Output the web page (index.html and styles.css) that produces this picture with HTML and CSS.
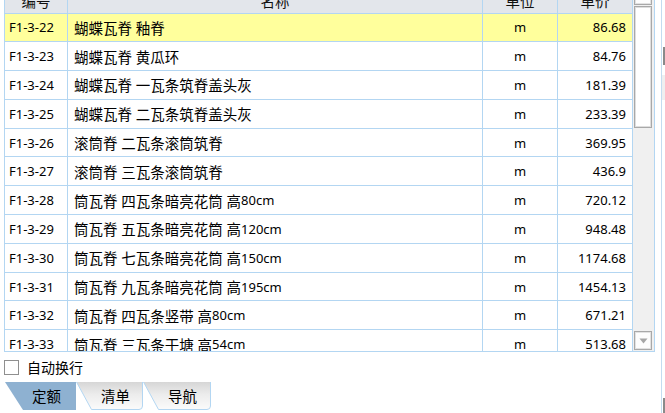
FILE: index.html
```html
<!DOCTYPE html>
<html lang="zh-CN">
<head>
<meta charset="utf-8">
<title>定额</title>
<link rel="stylesheet" href="styles.css">
</head>
<body>
<div class="page">
  <div class="main">
    <div class="grid">
      <div class="table">
        <div class="row head">
          <div class="cell c">编号</div>
          <div class="cell c">名称</div>
          <div class="cell c">单位</div>
          <div class="cell c">单价</div>
        </div>
        <div class="row sel">
          <div class="cell code">F1-3-22</div>
          <div class="cell name">蝴蝶瓦脊 釉脊</div>
          <div class="cell unit">m</div>
          <div class="cell price">86.68</div>
        </div>
        <div class="row">
          <div class="cell code">F1-3-23</div>
          <div class="cell name">蝴蝶瓦脊 黄瓜环</div>
          <div class="cell unit">m</div>
          <div class="cell price">84.76</div>
        </div>
        <div class="row">
          <div class="cell code">F1-3-24</div>
          <div class="cell name">蝴蝶瓦脊 一瓦条筑脊盖头灰</div>
          <div class="cell unit">m</div>
          <div class="cell price">181.39</div>
        </div>
        <div class="row">
          <div class="cell code">F1-3-25</div>
          <div class="cell name">蝴蝶瓦脊 二瓦条筑脊盖头灰</div>
          <div class="cell unit">m</div>
          <div class="cell price">233.39</div>
        </div>
        <div class="row">
          <div class="cell code">F1-3-26</div>
          <div class="cell name">滚筒脊 二瓦条滚筒筑脊</div>
          <div class="cell unit">m</div>
          <div class="cell price">369.95</div>
        </div>
        <div class="row">
          <div class="cell code">F1-3-27</div>
          <div class="cell name">滚筒脊 三瓦条滚筒筑脊</div>
          <div class="cell unit">m</div>
          <div class="cell price">436.9</div>
        </div>
        <div class="row">
          <div class="cell code">F1-3-28</div>
          <div class="cell name">筒瓦脊 四瓦条暗亮花筒 高<span class="lat">80cm</span></div>
          <div class="cell unit">m</div>
          <div class="cell price">720.12</div>
        </div>
        <div class="row">
          <div class="cell code">F1-3-29</div>
          <div class="cell name">筒瓦脊 五瓦条暗亮花筒 高<span class="lat">120cm</span></div>
          <div class="cell unit">m</div>
          <div class="cell price">948.48</div>
        </div>
        <div class="row">
          <div class="cell code">F1-3-30</div>
          <div class="cell name">筒瓦脊 七瓦条暗亮花筒 高<span class="lat">150cm</span></div>
          <div class="cell unit">m</div>
          <div class="cell price">1174.68</div>
        </div>
        <div class="row">
          <div class="cell code">F1-3-31</div>
          <div class="cell name">筒瓦脊 九瓦条暗亮花筒 高<span class="lat">195cm</span></div>
          <div class="cell unit">m</div>
          <div class="cell price">1454.13</div>
        </div>
        <div class="row">
          <div class="cell code">F1-3-32</div>
          <div class="cell name">筒瓦脊 四瓦条竖带 高<span class="lat">80cm</span></div>
          <div class="cell unit">m</div>
          <div class="cell price">671.21</div>
        </div>
        <div class="row">
          <div class="cell code">F1-3-33</div>
          <div class="cell name">筒瓦脊 三瓦条干塘 高<span class="lat">54cm</span></div>
          <div class="cell unit">m</div>
          <div class="cell price">513.68</div>
        </div>
      </div>
      <div class="scrollbar">
        <div class="sb-btn sb-up"></div>
        <div class="sb-thumb"></div>
        <div class="sb-fill"></div>
        <div class="sb-btn sb-down">
          <svg width="9" height="6" viewBox="0 0 9 6"><path d="M0.5 0.5 H8.5 L4.5 5.5 Z" fill="#a6a6a6"/></svg>
        </div>
      </div>
    </div>

    <div class="options">
      <span class="checkbox"></span>
      <span class="opt-label">自动换行</span>
    </div>

    <div class="tabs">
      <div class="tab active">
        <svg class="tab-bg" width="71" height="28" viewBox="0 0 71 28"><path d="M0 0 H71 V28 H18 Z" fill="#8eb1d1"/></svg>
        <span class="tab-label">定额</span>
      </div>
      <div class="tab t2">
        <svg class="tab-bg" width="67" height="28" viewBox="0 0 67 28">
          <defs>
            <linearGradient id="tg" x1="0" y1="0" x2="0" y2="1">
              <stop offset="0" stop-color="#d6d6d6"/>
              <stop offset="0.45" stop-color="#ececec"/>
              <stop offset="1" stop-color="#fbfbfb"/>
            </linearGradient>
          </defs>
          <path d="M0.5 0 L15.5 27.5 H63 Q66.5 27.5 66.5 24 V0 Z" fill="url(#tg)"/>
          <path d="M0.5 0 L15.5 27.5 H63 Q66.5 27.5 66.5 24 V0" fill="none" stroke="#b3d6f2" stroke-width="1"/>
        </svg>
        <span class="tab-label">清单</span>
      </div>
      <div class="tab t3">
        <svg class="tab-bg" width="68" height="28" viewBox="0 0 68 28">
          <path d="M0.5 0 L15.5 27.5 H64 Q67.5 27.5 67.5 24 V0 Z" fill="url(#tg)"/>
          <path d="M0.5 0 L15.5 27.5 H64 Q67.5 27.5 67.5 24 V0" fill="none" stroke="#b3d6f2" stroke-width="1"/>
        </svg>
        <span class="tab-label">导航</span>
      </div>
    </div>
  </div>
  <div class="side">
    <div class="side-a"></div>
    <div class="side-b"></div>
    <div class="side-fill"></div>
    <div class="side-c"></div>
  </div>
</div>
</body>
</html>
```
FILE: styles.css
```css
html, body {
  margin: 0;
  padding: 0;
  background: #ffffff;
}
body {
  font-family: "Noto Sans", "Noto Sans CJK SC", sans-serif;
  font-size: 13px;
  color: #000;
  overflow: hidden;
}
.page {
  display: flex;
  width: 665px;
  height: 413px;
}
.main {
  width: 662px;
  display: flex;
  flex-direction: column;
}
.grid {
  margin-left: 4px;
  width: 651px;
  height: 352px;
  box-sizing: border-box;
  border-left: 1px solid #b3d6f2;
  border-right: 1px solid #b3d6f2;
  border-bottom: 1px solid #b3d6f2;
  display: flex;
  overflow: hidden;
}
.table {
  width: 628px;
  flex: none;
  display: flex;
  flex-direction: column;
  margin-top: -14.5px;
}
.row {
  display: grid;
  grid-template-columns: 63px 415px 75px 75px;
  height: 28.8px;
  flex: none;
  box-sizing: border-box;
  border-bottom: 1px solid #b3d6f2;
}
.row.head {
  height: 28px;
  background: #e3e6eb;
}
.row.sel {
  background: #ffff9c;
}
.cell {
  box-sizing: border-box;
  border-right: 1px solid #b3d6f2;
  display: flex;
  align-items: center;
  white-space: nowrap;
  overflow: hidden;
}
.head .cell {
  justify-content: center;
  font-size: 14.5px;
  padding-top: 2px;
  color: #111;
}
.code {
  padding-left: 4px;
}
.name {
  padding-left: 6px;
  font-size: 14.5px;
}
.lat {
  font-size: 13px;
}
.unit {
  justify-content: center;
}
.price {
  justify-content: flex-end;
  padding-right: 6px;
}
.scrollbar {
  width: 21px;
  flex: none;
  background: #f0f0f0;
  display: flex;
  flex-direction: column;
}
.sb-btn {
  box-sizing: border-box;
  width: 18px;
  margin-left: 1px;
  border: 1px solid #a8a8a8;
  background: #fdfdfd;
  box-shadow: inset 0 0 0 1px #e2e2e2;
  flex: none;
}
.sb-up {
  height: 18px;
  margin-top: -13px;
}
.sb-thumb {
  box-sizing: border-box;
  width: 18px;
  margin-left: 1px;
  margin-top: 1px;
  height: 122px;
  border: 1px solid #a8a8a8;
  background: #ffffff;
  box-shadow: inset 0 0 0 1px #dedede;
  flex: none;
}
.sb-fill {
  flex: 1;
}
.sb-down {
  height: 19px;
  margin-bottom: 1px;
  display: flex;
  align-items: center;
  justify-content: center;
}
.options {
  display: flex;
  align-items: center;
  gap: 8px;
  margin-top: 8px;
  margin-left: 4px;
  height: 15px;
}
.checkbox {
  width: 15px;
  height: 15px;
  box-sizing: border-box;
  border: 1px solid #8f8f8f;
  background: #fff;
  flex: none;
}
.opt-label {
  font-size: 14px;
  line-height: 15px;
}
.tabs {
  display: flex;
  margin-top: 7px;
  margin-left: 5px;
  height: 28px;
}
.tab {
  position: relative;
  height: 28px;
  display: flex;
  align-items: center;
  box-sizing: border-box;
  flex: none;
}
.tab-bg {
  position: absolute;
  left: 0;
  top: 0;
}
.tab-label {
  position: relative;
  font-size: 14.5px;
  line-height: 28px;
}
.tab.active {
  width: 71px;
  padding-left: 27px;
}
.tab.t2 {
  width: 67px;
  padding-left: 25px;
}
.tab.t3 {
  width: 68px;
  padding-left: 25px;
}
.side {
  flex: 1;
  border-left: 1px solid #c3dcf0;
  display: flex;
  flex-direction: column;
  align-items: flex-end;
}
.side-a {
  width: 2px;
  height: 18px;
  margin-top: 47px;
  background: #8a8a8a;
}
.side-b {
  width: 3px;
  height: 25px;
  margin-top: 10px;
  background: #efefef;
}
.side-fill {
  flex: 1;
}
.side-c {
  width: 2px;
  height: 15px;
  background: #8a8a8a;
}
```
